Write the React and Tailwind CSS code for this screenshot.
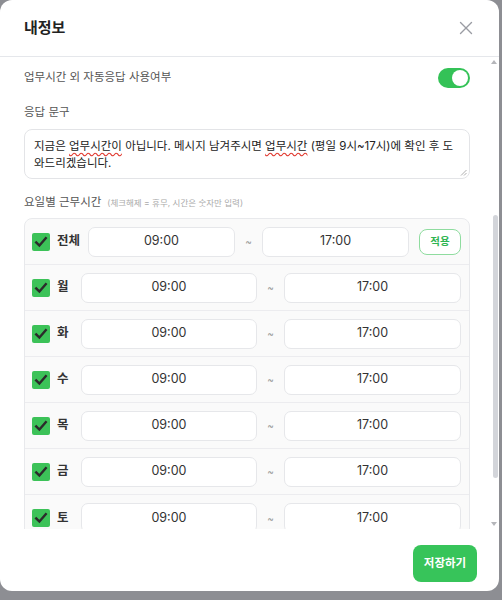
import { useState } from 'react';
import { X } from 'lucide-react';

const FONT = "font-['Inter','Noto_Sans_CJK_KR',sans-serif]";

const days = ['월', '화', '수', '목', '금', '토'];

function CheckBox() {
  return (
    <div className="w-[18px] h-[18px] shrink-0 rounded-[2px] bg-[#3cc258] flex items-center justify-center">
      <svg width="14" height="14" viewBox="0 0 14 14" fill="none">
        <path d="M2.2 7.4 L5.4 10.6 L11.8 3.2" stroke="#2b2b2b" strokeWidth="2.4" strokeLinecap="square" />
      </svg>
    </div>
  );
}

function TimeBox({ value, className = '' }) {
  return (
    <div className={`h-[30px] bg-white border border-[#e6e7ea] rounded-[7px] flex items-center justify-center text-[12.5px] text-[#333] ${className}`}>
      {value}
    </div>
  );
}

export default function App() {
  const [enabled] = useState(true);

  return (
    <div className={`w-[502px] h-[600px] bg-[#8d8e93] ${FONT}`}>
      <div className="w-[499px] h-[591px] bg-white rounded-xl flex flex-col overflow-hidden">
        {/* header */}
        <div className="h-[57px] shrink-0 border-b border-[#e5e7eb] flex items-center justify-between pl-6 pr-[22px]">
          <h1 className="text-[15px] font-bold text-[#222]">내정보</h1>
          <X size={22} strokeWidth={1.5} className="text-[#9a9ca3]" />
        </div>

        {/* body */}
        <div className="flex-1 min-h-0 flex">
          <div className="flex-1 min-w-0 overflow-hidden pl-6 pr-[19px] pt-[11px]">
            <div className="h-[20px] flex items-center justify-between">
              <span className="text-[11.5px] text-[#555]">업무시간 외 자동응답 사용여부</span>
              <div className={`w-[32px] h-[20px] rounded-full p-[2px] flex ${enabled ? 'bg-[#34c257] justify-end' : 'bg-gray-300'}`}>
                <div className="w-[16px] h-[16px] rounded-full bg-white" />
              </div>
            </div>

            <div className="mt-[15px] text-[11.5px] text-[#555] leading-[18px]">응답 문구</div>
            <div className="mt-[8px] h-[50px] border border-[#e3e4e7] rounded-[8px] px-[9px] pt-[8px] text-[11.5px] leading-[17px] text-[#222] relative">
              <div className="whitespace-nowrap">
                지금은 <span className="underline decoration-wavy decoration-[#e0352b] underline-offset-2">업무시간이</span> 아닙니다. 메시지 남겨주시면{' '}
                <span className="underline decoration-wavy decoration-[#e0352b] underline-offset-2">업무시간</span> (평일 9시~17시)에 확인 후 도
              </div>
              <div>와드리겠습니다.</div>
              <svg className="absolute right-[2px] bottom-[2px]" width="7" height="7" viewBox="0 0 7 7">
                <path d="M6.5 1 L1 6.5 M6.5 4 L4 6.5" stroke="#999" strokeWidth="0.8" />
              </svg>
            </div>

            <div className="mt-[14px] leading-[18px] flex items-baseline gap-[6px]">
              <span className="text-[11.5px] text-[#555]">요일별 근무시간</span>
              <span className="text-[8.5px] text-[#aaa]">(체크해제 = 휴무, 시간은 숫자만 입력)</span>
            </div>

            <div className="mt-[6px] border border-[#e8e9ec] rounded-[8px] bg-[#fafafa]">
              <div className="h-[46px] flex items-center pl-[7px] pr-[8px] border-b border-[#ececef]">
                <CheckBox />
                <span className="ml-[7px] w-[31px] shrink-0 text-[12.5px] font-bold text-[#333]">전체</span>
                <TimeBox value="09:00" className="w-[147px]" />
                <span className="w-[27px] text-center text-[10px] text-[#999]">~</span>
                <TimeBox value="17:00" className="w-[147px]" />
                <button className="ml-[10px] w-[42px] h-[26px] rounded-[8px] border border-[#8fdc9f] bg-white text-[10.5px] font-bold text-[#2fb552]">
                  적용
                </button>
              </div>
              {days.map((d) => (
                <div key={d} className="h-[46px] flex items-center pl-[7px] pr-[8px] border-b border-[#ececef] last:border-b-0">
                  <CheckBox />
                  <span className="ml-[7px] w-[24px] shrink-0 text-[12.5px] font-bold text-[#333]">{d}</span>
                  <TimeBox value="09:00" className="w-[176px]" />
                  <span className="w-[27px] text-center text-[10px] text-[#999]">~</span>
                  <TimeBox value="17:00" className="w-[177px]" />
                </div>
              ))}
            </div>
          </div>

          {/* scrollbar */}
          <div className="w-[10px] shrink-0 flex flex-col items-center pt-[3px] pb-[3px]">
            <svg width="6" height="4" viewBox="0 0 6 4"><path d="M3 0 L6 4 L0 4 Z" fill="#b5b6ba" /></svg>
            <div className="mt-[151px] w-[5px] h-[263px] rounded-full bg-[#d3d5da] ml-[2px]" />
            <div className="flex-1" />
            <svg width="6" height="4" viewBox="0 0 6 4"><path d="M0 0 L6 0 L3 4 Z" fill="#b5b6ba" /></svg>
          </div>
        </div>

        {/* footer */}
        <div className="h-[62px] shrink-0 flex justify-end pt-4 pr-[22px]">
          <button className="w-[64px] h-[37px] rounded-[8px] bg-[#37c45a] text-white text-[11.5px] font-bold">
            저장하기
          </button>
        </div>
      </div>
    </div>
  );
}
